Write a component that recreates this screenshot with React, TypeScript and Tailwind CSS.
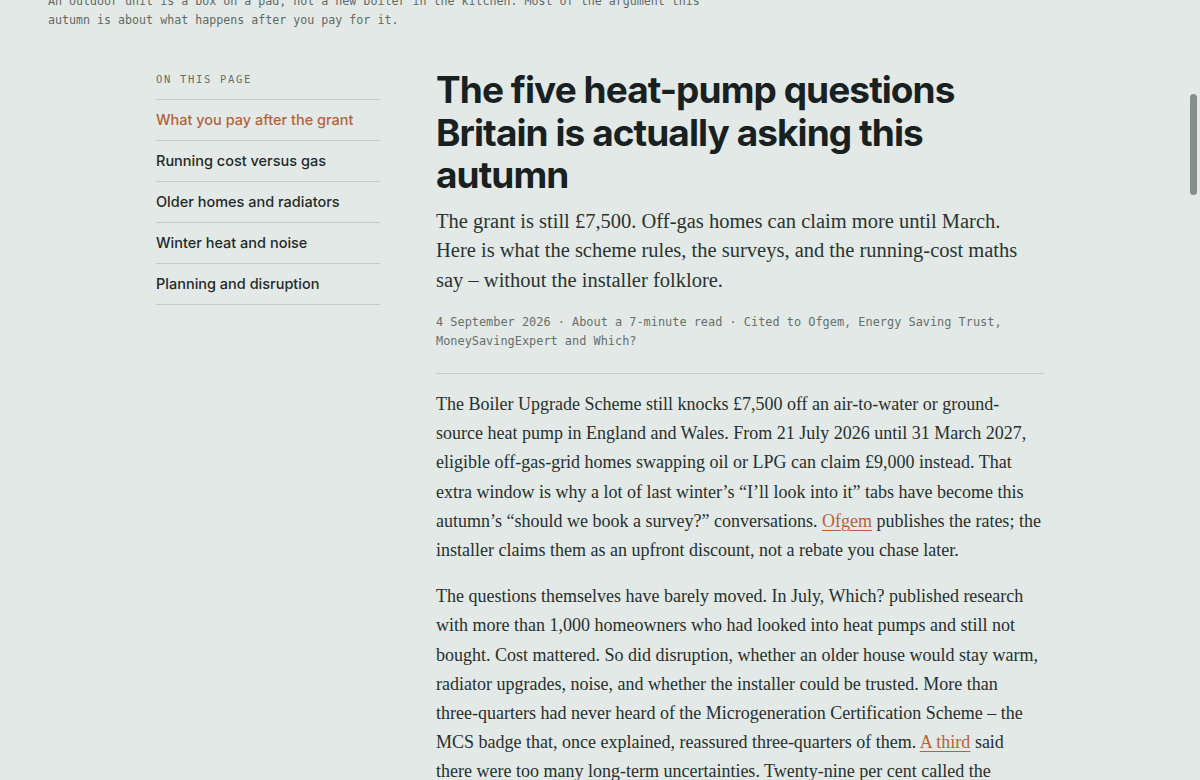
import React from "react";

const NAV_ITEMS = [
  "What you pay after the grant",
  "Running cost versus gas",
  "Older homes and radiators",
  "Winter heat and noise",
  "Planning and disruption",
];

const sans = "font-['Inter','Noto_Sans',sans-serif]";
const serif = "font-['Liberation_Serif','DejaVu_Serif',serif]";
const mono = "font-['DejaVu_Sans_Mono','Liberation_Mono',monospace]";

function Link({ children }: { children: React.ReactNode }) {
  return (
    <a
      href="#"
      className="text-[#b3633b] underline decoration-1 underline-offset-[3px]"
    >
      {children}
    </a>
  );
}

export default function App() {
  return (
    <div className="relative h-[780px] overflow-hidden bg-[#e3e9e7] text-[#1c2624]">
      {/* tail of the hero caption, scrolled past */}
      <p className={`${mono} -mt-[8px] px-12 text-[11.65px] leading-[19px] text-[#5f6966]`}>
        An outdoor unit is a box on a pad, not a new boiler in the kitchen. Most of the argument this
        <br />
        autumn is about what happens after you pay for it.
      </p>

      <div className="mx-auto mt-[39px] grid max-w-[888px] grid-cols-[224px_1fr] gap-14">
        {/* Table of contents */}
        <nav className="pt-[2px]">
          <div className={`${mono} text-[10.5px] leading-4 tracking-[0.16em] text-[#65706d]`}>
            ON THIS PAGE
          </div>
          <ul className="mt-[12px] border-b border-[#c3ccc9]">
            {NAV_ITEMS.map((item, i) => (
              <li
                key={item}
                className={`${sans} flex h-[41px] items-center border-t border-[#c3ccc9] text-[14.5px] font-medium ${
                  i === 0 ? "text-[#b3633b]" : "text-[#1f2927]"
                }`}
              >
                {item}
              </li>
            ))}
          </ul>
        </nav>

        {/* Article */}
        <article>
          <h1
            className={`${sans} text-[37px] font-bold leading-[42.5px] tracking-[-0.025em] text-[#18211f]`}
          >
            The five heat-pump questions Britain is actually asking this autumn
          </h1>
          <p className={`${serif} mt-[10px] text-[20.5px] leading-[29.5px] text-[#2a3431]`}>
            The grant is still £7,500. Off-gas homes can claim more until March. Here is what the
            scheme rules, the surveys, and the running-cost maths say – without the installer
            folklore.
          </p>
          <p className={`${mono} mt-[18px] text-[11.9px] leading-[19px] text-[#65706d]`}>
            4 September 2026 · About a 7-minute read · Cited to Ofgem, Energy Saving Trust,
            MoneySavingExpert and Which?
          </p>

          <div className="mt-[22px] border-t border-[#c3ccc9] pt-4">
            <div className={`${serif} space-y-[17px] text-[18px] leading-[29.2px] text-[#27302e]`}>
              <p>
                The Boiler Upgrade Scheme still knocks £7,500 off an air-to-water or ground-source
                heat pump in England and Wales. From 21 July 2026 until 31 March 2027, eligible
                off-gas-grid homes swapping oil or LPG can claim £9,000 instead. That extra window
                is why a lot of last winter’s “I’ll look into it” tabs have become this autumn’s
                “should we book a survey?” conversations. <Link>Ofgem</Link> publishes the rates;
                the installer claims them as an upfront discount, not a rebate you chase later.
              </p>
              <p>
                The questions themselves have barely moved. In July, Which? published research with
                more than 1,000 homeowners who had looked into heat pumps and still not bought.
                Cost mattered. So did disruption, whether an older house would stay warm, radiator
                upgrades, noise, and whether the installer could be trusted. More than
                three-quarters had never heard of the Microgeneration Certification Scheme – the
                MCS badge that, once explained, reassured three-quarters of them.{" "}
                <Link>A third</Link> said there were too many long-term uncertainties. Twenty-nine
                per cent called the upfront cost the single biggest barrier, even after the grant.
              </p>
            </div>
          </div>
        </article>
      </div>

      {/* scrollbar thumb */}
      <div className="absolute right-[3px] top-[94px] h-[101px] w-[7px] rounded-full bg-[#858f8c]" />
    </div>
  );
}
